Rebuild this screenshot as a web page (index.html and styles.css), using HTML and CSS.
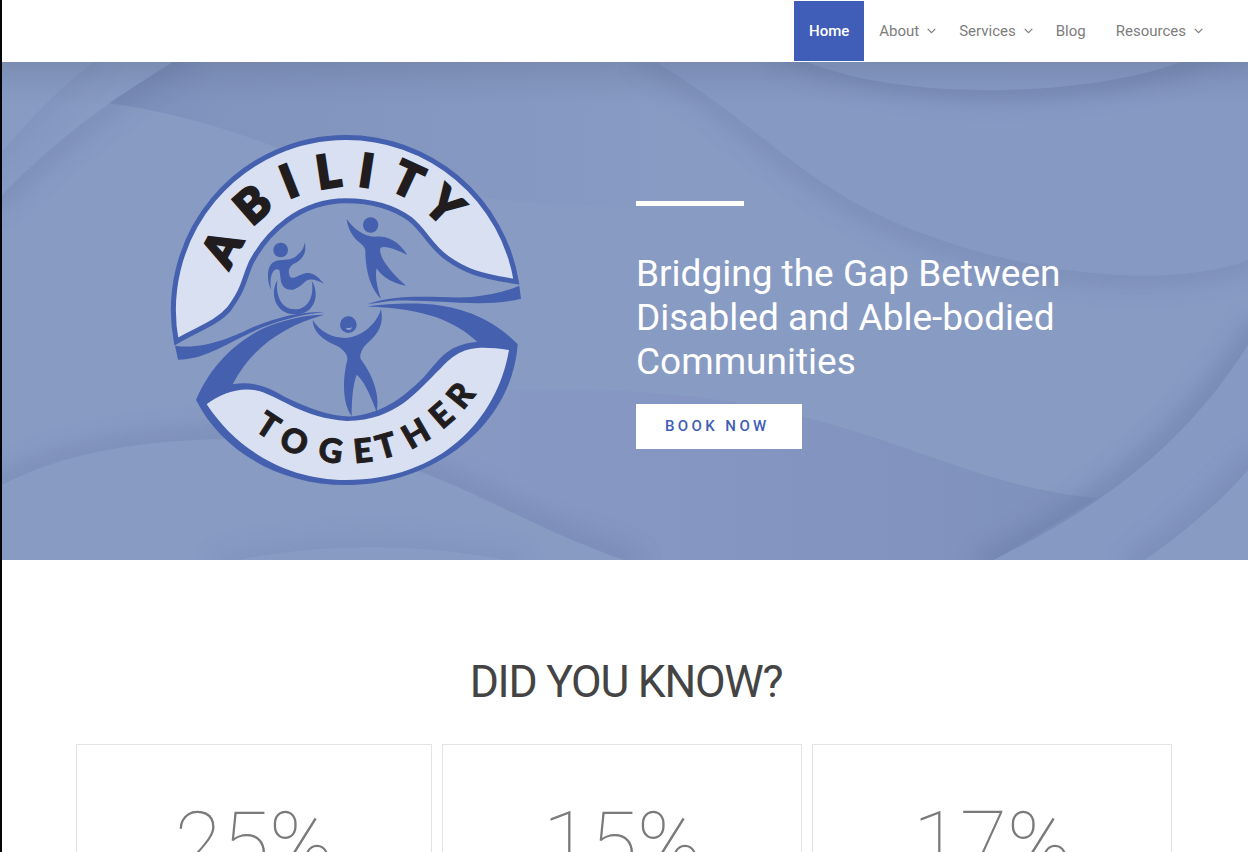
FILE: index.html
```
<!DOCTYPE html>
<html lang="en">
<head>
<meta charset="utf-8">
<title>Ability Together</title>
<link rel="stylesheet" href="styles.css">
</head>
<body>
<div class="page">
  <span class="edge-mark"></span>
  <header class="header">
    <nav class="nav">
      <a class="nav-item active">Home</a>
      <a class="nav-item has-menu">About<svg class="caret" viewBox="0 0 9 6"><path d="M.7 .8 4.5 4.6 8.3 .8"/></svg></a>
      <a class="nav-item has-menu">Services<svg class="caret" viewBox="0 0 9 6"><path d="M.7 .8 4.5 4.6 8.3 .8"/></svg></a>
      <a class="nav-item">Blog</a>
      <a class="nav-item has-menu">Resources<svg class="caret" viewBox="0 0 9 6"><path d="M.7 .8 4.5 4.6 8.3 .8"/></svg></a>
    </nav>
  </header>

  <section class="hero">
    <svg class="waves" viewBox="2 62 1246 498" preserveAspectRatio="none">
      <defs>
        <filter id="soft" filterUnits="userSpaceOnUse" x="-100" y="-50" width="1450" height="750"><feGaussianBlur stdDeviation="11"/></filter>
        <linearGradient id="top" x1="0" y1="0" x2="0" y2="1"><stop offset="0" stop-color="#50607f" stop-opacity=".24"/><stop offset=".5" stop-color="#50607f" stop-opacity=".09"/><stop offset="1" stop-color="#50607f" stop-opacity="0"/></linearGradient>
        <linearGradient id="band" gradientUnits="userSpaceOnUse" x1="110" y1="0" x2="700" y2="0"><stop offset="0" stop-color="#7b8eb9"/><stop offset=".18" stop-color="#8194be"/><stop offset="1" stop-color="#889bc3"/></linearGradient>
        <linearGradient id="low" gradientUnits="userSpaceOnUse" x1="480" y1="0" x2="1100" y2="0"><stop offset="0" stop-color="#8799c3"/><stop offset=".35" stop-color="#8496c1"/><stop offset="1" stop-color="#7e91bb"/></linearGradient>
        <clipPath id="c1"><path d="M173 62C106 102 50 145 2 195V570H1260V62Z"/></clipPath>
        <clipPath id="c2"><path d="M2 485C60 454 140 440 227 439C420 440 480 510 624 560H1260V50H2Z"/></clipPath>
        <clipPath id="c3"><path d="M656 62C740 112 790 168 863 207C990 272 1160 293 1248 260V570H2V50Z"/></clipPath>
        <clipPath id="c4"><path d="M1248 345C1190 438 1110 503 994 560H2V50H1248Z"/></clipPath>
        <clipPath id="c5"><path d="M807 62C900 100 1080 99 1181 62H1260V300H600V62Z"/></clipPath>
        <clipPath id="c6"><path d="M1248 345C1190 438 1110 503 994 560H1145C1180 535 1218 505 1248 470Z"/></clipPath>
        <clipPath id="c7"><path d="M94 62C60 87 30 118 2 152V195C50 145 106 102 173 62Z"/></clipPath>
        <clipPath id="c8"><path d="M2 485C60 454 140 440 227 439C420 440 480 510 624 560H505C420 543 320 543 239 560H2Z"/></clipPath>
      </defs>
      <rect x="0" y="60" width="1250" height="502" fill="#889bc3"/>
      <path d="M173 62 109 103C175 113 225 128 275 147C390 190 500 205 624 207H820L656 62Z" fill="url(#band)"/>
      <path d="M480 392C620 385 730 395 830 424C930 452 1000 490 1098 498L994 560H624C560 538 480 495 418 470Z" fill="url(#low)"/>
      <g clip-path="url(#c1)"><path d="M190 50C106 102 50 145 -10 205" class="shade light" filter="url(#soft)"/></g>
      <g clip-path="url(#c2)"><path d="M-10 491C60 454 140 440 227 439C420 440 480 510 640 565" class="shade light" filter="url(#soft)"/></g>
      <g clip-path="url(#c3)"><path d="M640 52C740 112 790 168 863 207C990 272 1160 293 1260 254" class="shade light" filter="url(#soft)"/></g>
      <path d="M656 62C740 112 790 168 863 207C990 272 1160 293 1248 260V62Z" fill="#8699c3"/>
      <g clip-path="url(#c5)"><path d="M770 44C900 100 1080 99 1200 55L1280 25" class="shade" filter="url(#soft)"/></g>
      <g clip-path="url(#c4)"><path d="M1262 323C1190 438 1110 503 980 567" class="shade" filter="url(#soft)"/></g>
      <path d="M1248 345C1190 438 1110 503 994 560H1145C1180 535 1218 505 1248 470Z" fill="#8699c3"/>
      <g clip-path="url(#c6)"><path d="M1130 570C1180 535 1218 505 1260 456" class="shade light" filter="url(#soft)"/></g>
      <g clip-path="url(#c7)"><path d="M100 57C60 87 30 118 -5 160" class="shade faint" filter="url(#soft)"/></g>
      <g clip-path="url(#c8)"><path d="M215 565C320 543 420 543 525 565" class="shade faint" filter="url(#soft)"/></g>
      <rect x="2" y="62" width="1246" height="44" fill="url(#top)"/>
    </svg>

    <div class="hero-inner">
      <svg class="logo" viewBox="166 130 360 360">
        <path d="M176.300 341.500A172.500 172.500 0 0 1 346 137.500A172.500 172.500 0 0 1 516.300 281.500C480 276 465 271 447 258C430 246 425 231 410 219C392 206 369 200.700 346 200.700C300 200.700 267 232 251 263C243 281 245 287 229 309C216 324 197 329 176.300 341.500Z" fill="#d9e0f2" stroke="#4460ae" stroke-width="5"/>
        <g fill="#4460ae">
          <path d="M196 400C212 362 240 340 262 329C283 320 303 315 324 314.700C284 326 252 347 232.700 384.300C251 381 267 386 285 397C310 409 329 416 350 416.500C381 414 402 399 424 377C442 356 448 345 477.300 341.700C456 322 426 308 367.300 306.400C388 304 416 302 440 305.500C476 311 500 326 517.700 344.300C512 425 434 485 346 485C276 485 220 448 196 400Z"/>
          <path transform="translate(170 270) scale(.33333)" d="M15 227C100 240 190 200 250 171C330 138 400 124 464 126C380 134 300 160 240 189C150 232 100 268 24 269Z"/>
          <path d="M367.300 304.300C399 292 443 299 472 297Q501 294 519.300 285.700L521 298.700C481 309 432 298 390 301Z"/>
        </g>
        <path d="M206.700 404.300C220 394 240 386 259 391C280 397 303 418 347 421C397 420 416 392 441 368C458 350 470 344 509 350C497 420 440 480 346 480C286 480 236 449 206.700 404.300Z" fill="#d9e0f2"/>
        <g fill="#4460ae" transform="translate(160 125) scale(.33333)">
          <circle cx="362" cy="375" r="22"/>
          <path d="M434 352C441 380 430 402 405 415C388 422 382 440 390 455C402 466 415 448 440 444C462 442 478 460 492 476C470 465 450 458 435 470C420 485 400 500 380 492C358 482 363 455 358 436C345 425 326 445 333 495C316 455 323 412 350 407C375 402 390 408 410 392C425 380 432 370 434 352Z"/>
          <path transform="translate(300 330)" d="M52 136C30 170 42 237 104 238C168 238 180 175 155 137C164 188 142 223 104 223C66 223 46 185 52 136Z"/>
        </g>
        <g fill="#4460ae" transform="translate(340 125) scale(.33333)">
          <circle cx="92" cy="300" r="23"/>
          <path d="M20 282C40 310 70 335 105 335C150 332 180 355 202 390C170 374 132 358 121 370C115 395 150 440 198 482C160 477 125 455 110 430C104 455 112 490 123 522C92 490 76 440 76 375C72 360 60 355 50 345C30 325 22 300 20 282Z"/>
        </g>
        <g fill="#4460ae" transform="translate(340 305) scale(.33333)">
          <circle cx="25" cy="59" r="25"/>
          <path d="M-82 45C-60 80 -25 98 15 99C60 98 110 60 123 12C132 60 115 85 85 112C65 130 58 150 62 162C90 200 122 260 110 322C95 280 75 230 50 209C38 240 35 290 35 333C10 300 5 230 22 165C25 150 10 132 -10 122C-45 108 -80 85 -82 45Z"/>
          <path d="M17 70C24 68 32 71 37 66C34 77 22 77 17 70Z" fill="#91a1cd"/>
        </g>
        <g class="word word-top">
          <text transform="translate(221.200 248) rotate(-62)" y="17">A</text>
          <text transform="translate(252.200 204) rotate(-41)" y="17">B</text>
          <text transform="translate(288.700 180.700) rotate(-21.400)" y="17">I</text>
          <text transform="translate(328 170.700) rotate(-8.500)" y="17">L</text>
          <text transform="translate(366.700 170) rotate(8.700)" y="17">I</text>
          <text transform="translate(408 179.300) rotate(25)" y="17">T</text>
          <text transform="translate(445 205) rotate(44)" y="17">Y</text>
        </g>
        <g class="word word-bottom">
          <text transform="translate(268.300 425) rotate(33)" y="12">T</text>
          <text transform="translate(294.300 441) rotate(22)" y="12">O</text>
          <text transform="translate(330.700 450.300) rotate(8)" y="12">G</text>
          <text transform="translate(363 450.300) rotate(-6)" y="12">E</text>
          <text transform="translate(386 445.500) rotate(-16)" y="12">T</text>
          <text transform="translate(415.500 433.300) rotate(-30)" y="12">H</text>
          <text transform="translate(441.200 415) rotate(-41)" y="12">E</text>
          <text transform="translate(460.200 395) rotate(-51)" y="12">R</text>
        </g>
      </svg>
      <div class="pitch">
        <div class="rule"></div>
        <h1 class="headline">Bridging the Gap Between<br>Disabled and Able-bodied<br>Communities</h1>
        <a class="book">BOOK NOW</a>
      </div>
    </div>
  </section>

  <section class="facts">
    <h2 class="facts-title">DID YOU KNOW?</h2>
    <div class="cards">
      <div class="card">25%</div>
      <div class="card">15%</div>
      <div class="card">17%</div>
    </div>
  </section>
</div>
</body>
</html>
```
FILE: styles.css
```
* { box-sizing: border-box; }
body { margin: 0; background: #fff; font-family: Roboto, "Liberation Sans", sans-serif; }
.page { position: relative; height: 852px; overflow: hidden; border-left: 2px solid #05060a; }
.edge-mark { position: absolute; left: -2px; top: 223px; width: 2px; height: 9px; background: linear-gradient(#ddd 0 1px, #05060a 1px 4px, #4c9cc8 4px 5px, #05060a 5px 8px, #ddd 8px); }

.header { height: 62px; padding: 1px 37px 1px 0; display: flex; justify-content: flex-end; background: #fff; }
.nav { display: flex; height: 60px; }
.nav-item { display: flex; align-items: center; padding: 0 15px; font-size: 15px; color: #7d7d7d; white-space: nowrap; }
.nav-item.has-menu { padding-right: 8px; }
.nav-item.active { background: #405db8; color: #fff; font-weight: 500; }
.caret { width: 9px; height: 6px; margin-left: 8px; fill: none; stroke: #7d7d7d; stroke-width: 1.2; }

.hero { position: relative; height: 498px; background: #889bc3; }
.waves { position: absolute; inset: 0; width: 100%; height: 100%; display: block; }
.shade { fill: none; stroke: #62749f; stroke-width: 24; opacity: .45; }
.shade.light { opacity: .3; }
.shade.faint { opacity: .16; }
.hero-inner { position: relative; display: flex; align-items: flex-start; padding: 68px 0 0 164px; }
.logo { width: 360px; height: 360px; flex: none; }
.word { font-family: Lato, sans-serif; font-weight: 900; fill: #211d1f; stroke: #211d1f; text-anchor: middle; }
.word-top { font-size: 46px; stroke-width: 2.500px; }
.word-bottom { font-size: 33px; stroke-width: 1px; }
.pitch { padding: 71px 0 0 110px; }
.rule { width: 108px; height: 5px; background: #fff; }
.headline { margin: 46px 0 20px; font-size: 37px; line-height: 44px; font-weight: 400; color: #fff; white-space: nowrap; }
.book { display: flex; align-items: center; width: 166px; height: 45px; padding: 0 0 2px 29px; background: #fff; color: #405db8; font-size: 15px; font-weight: 500; letter-spacing: 3.400px; }

.facts { padding: 92px 76px 0 74px; }
.facts-title { margin: 0; height: 92px; padding-left: 4px; line-height: 60px; text-align: center; font-size: 44.500px; font-weight: 400; color: #444; letter-spacing: -1.250px; }
.cards { display: grid; grid-template-columns: 356px 360px 360px; gap: 10px; }
.card { height: 240px; padding-top: 44px; border: 1px solid #e3e3e3; text-align: center; font-size: 86px; line-height: 108px; font-weight: 100; color: #7a7a7a; }
```
